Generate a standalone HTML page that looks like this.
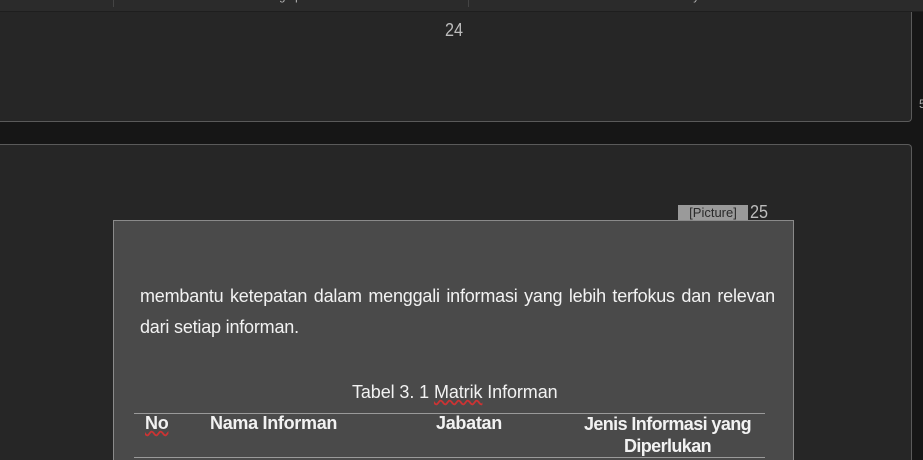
<!DOCTYPE html>
<html><head><style>
html,body{margin:0;width:923px;height:460px;overflow:hidden}
body{background:#161616;font-family:"Liberation Sans",Arial,sans-serif;position:relative}
div{position:absolute;box-sizing:border-box}
.t{color:#f2f2f2;white-space:nowrap}
</style></head><body>
<div style="left:0;top:0;width:923px;height:12px;background:#2b2b2b;border-bottom:1px solid #1e1e1e"></div>
<div style="left:113px;top:0;width:1px;height:7px;background:#444"></div>
<div style="left:468px;top:0;width:1px;height:7px;background:#444"></div>
<div class="t" style="left:256px;top:-9px;font-size:11px;color:#bbb">Paragraph</div>
<div class="t" style="left:683px;top:-9px;font-size:11px;color:#bbb">Styles</div>
<div style="left:0;top:12px;width:912px;height:110px;background:#262626;border:1px solid #5a5a5a;border-left:none;border-top:none;border-radius:0 0 4px 0"></div>
<div class="t" style="left:444px;top:20px;font-size:18px;color:#bdbdbd;transform:scaleX(0.9)">24</div>
<div class="t" style="left:919px;top:97px;font-size:12px;color:#aaa">5</div>
<div style="left:0;top:144px;width:912px;height:330px;background:#262626;border:1px solid #5a5a5a;border-left:none;border-radius:0 4px 0 0"></div>
<div style="left:678px;top:205px;width:70px;height:15px;background:#9a9a9a;color:#2a2a2a;font-size:13px;text-align:center;line-height:16px">[Picture]</div>
<div class="t" style="left:750px;top:202px;font-size:18px;color:#bdbdbd;transform:scaleX(0.9);transform-origin:left">25</div>
<div style="left:113px;top:220px;width:681px;height:260px;background:#4a4a4a;border:1px solid #8a8a8a"></div>
<div class="t" style="left:140px;top:286px;width:635px;font-size:18px;text-align:justify;text-align-last:justify;letter-spacing:-0.2px">membantu ketepatan dalam menggali informasi yang lebih terfokus dan relevan</div>
<div class="t" style="left:140px;top:317px;font-size:18px;letter-spacing:-0.2px">dari setiap informan.</div>
<div class="t" style="left:352px;top:382px;font-size:18px;letter-spacing:-0.1px">Tabel 3. 1 <span style="text-decoration:underline wavy #c33">Matrik</span> Informan</div>
<div style="left:134px;top:413px;width:631px;height:1px;background:#9a9a9a"></div>
<div style="left:134px;top:457px;width:631px;height:1px;background:#9a9a9a"></div>
<div class="t" style="left:145px;top:413px;font-size:18px;font-weight:bold;letter-spacing:-0.3px"><span style="text-decoration:underline wavy #c33">No</span></div>
<div class="t" style="left:210px;top:413px;font-size:18px;font-weight:bold;letter-spacing:-0.3px">Nama Informan</div>
<div class="t" style="left:436px;top:413px;font-size:18px;font-weight:bold;letter-spacing:-0.3px">Jabatan</div>
<div class="t" style="left:560px;top:413px;width:215px;font-size:18px;font-weight:bold;letter-spacing:-0.6px;text-align:center;line-height:22px">Jenis Informasi yang<br>Diperlukan</div>
</body></html>
